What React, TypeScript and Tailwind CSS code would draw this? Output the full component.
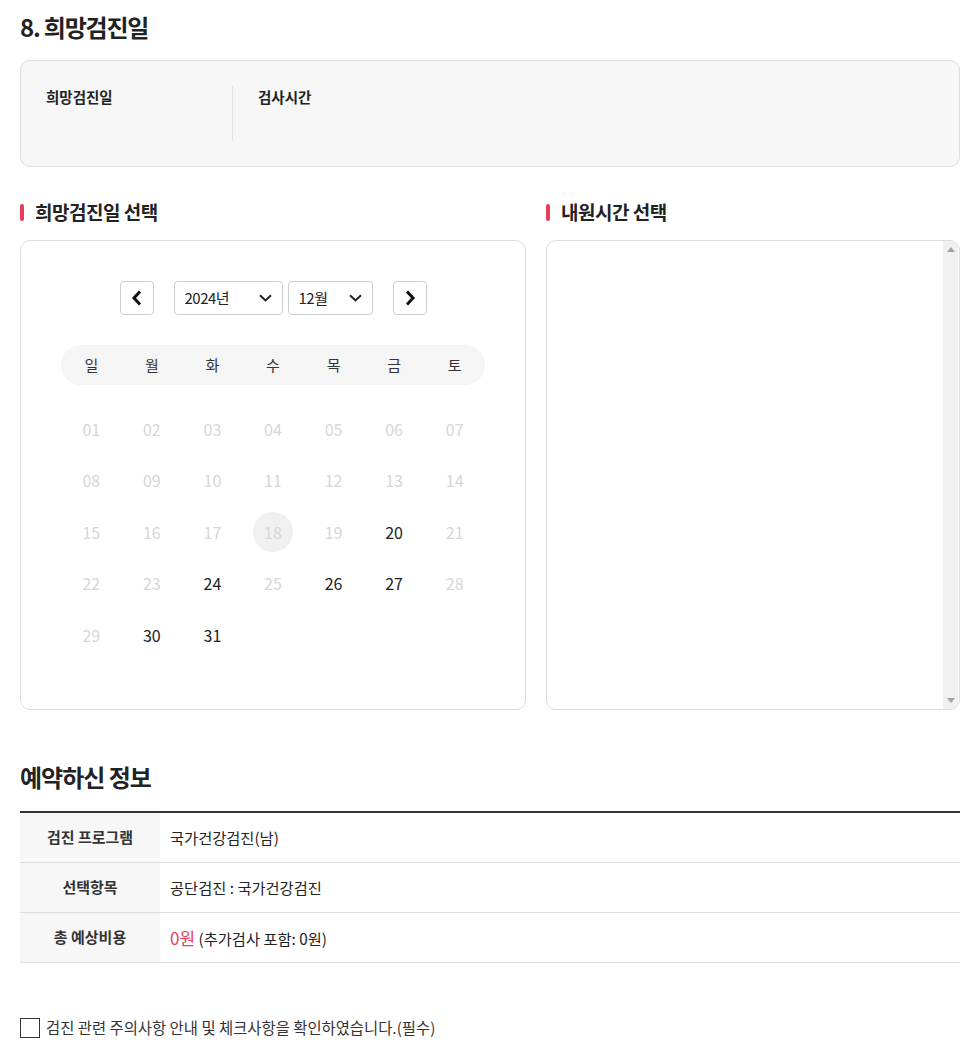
import React from "react";

const font = { fontFamily: '"Noto Sans CJK KR", "Noto Sans", sans-serif' };

const enabled = new Set([20, 24, 26, 27, 30, 31]);

function Chevron({ dir }: { dir: "left" | "right" }) {
  return (
    <svg width="16" height="18" viewBox="0 0 16 18">
      {dir === "left" ? (
        <path d="M11 2.5 L5 9 L11 15.5" fill="none" stroke="#111" strokeWidth="3" strokeLinejoin="miter" />
      ) : (
        <path d="M5 2.5 L11 9 L5 15.5" fill="none" stroke="#111" strokeWidth="3" strokeLinejoin="miter" />
      )}
    </svg>
  );
}

function Down() {
  return (
    <svg width="13" height="8" viewBox="0 0 13 8">
      <path d="M1 1.3 L6.5 6.4 L12 1.3" fill="none" stroke="#222" strokeWidth="2" />
    </svg>
  );
}

export default function App() {
  const days: (number | null)[] = [];
  for (let i = 1; i <= 31; i++) days.push(i);
  const rows: (number | null)[][] = [];
  for (let i = 0; i < 35; i += 7) {
    const r = days.slice(i, i + 7);
    while (r.length < 7) r.push(null);
    rows.push(r);
  }
  const weekdays = ["일", "월", "화", "수", "목", "금", "토"];

  return (
    <div className="w-[960px] bg-white pl-5 pt-[9px] text-[#222]" style={font}>
      <h2 className="text-[24px] font-bold leading-[36px] tracking-[-1.2px] text-[#222]">8. 희망검진일</h2>

      <div className="mt-[15px] flex h-[107px] rounded-[10px] border border-[#dddddd] bg-[#f7f7f7] px-[25px] pt-[25px]">
        <div className="w-[186px] text-[14.5px] font-bold leading-[22px] text-[#222]">희망검진일</div>
        <div className="h-[55px] w-px bg-[#e2e2e2]" />
        <div className="pl-[25px] text-[14.5px] font-bold leading-[22px] text-[#222]">검사시간</div>
      </div>

      <div className="mt-[32px] flex gap-5">
        <div className="w-[506px]">
          <div className="flex h-[26px] items-center gap-[11px]">
            <span className="h-[17px] w-[4px] rounded-full bg-[#e83e5c]" />
            <span className="text-[19px] font-bold leading-[26px] tracking-[-0.5px] text-[#222]">희망검진일 선택</span>
          </div>
          <div className="mt-[15px] h-[470px] rounded-[10px] border border-[#dddddd] pt-[40px]">
            <div className="flex items-center justify-center">
              <button className="flex h-[34px] w-[34px] items-center justify-center rounded-[4px] border border-[#cccccc] bg-white">
                <Chevron dir="left" />
              </button>
              <div className="ml-[20px] flex h-[34px] w-[109px] items-center justify-between rounded-[4px] border border-[#cccccc] bg-white pl-[10px] pr-[10px] text-[15px] text-[#222]">
                <span className="tracking-[-0.5px]">2024년</span>
                <Down />
              </div>
              <div className="ml-[5px] flex h-[34px] w-[85px] items-center justify-between rounded-[4px] border border-[#cccccc] bg-white pl-[10px] pr-[10px] text-[15px] text-[#222]">
                <span className="tracking-[-0.5px]">12월</span>
                <Down />
              </div>
              <button className="ml-[20px] flex h-[34px] w-[34px] items-center justify-center rounded-[4px] border border-[#cccccc] bg-white">
                <Chevron dir="right" />
              </button>
            </div>

            <div className="mx-[40px] mt-[30px]">
              <div className="grid h-[40px] grid-cols-7 items-center rounded-full bg-[#f5f5f5] text-[15px] text-[#333]">
                {weekdays.map((w) => (
                  <div key={w} className="text-center">{w}</div>
                ))}
              </div>
              <div className="mt-[18px]">
                {rows.map((r, ri) => (
                  <div key={ri} className="grid h-[51.5px] grid-cols-7 items-center">
                    {r.map((d, di) => (
                      <div key={di} className="flex justify-center">
                        {d !== null && (
                          <span
                            className={
                              "flex h-[40px] w-[40px] items-center justify-center rounded-full text-[16px] " +
                              (d === 18 ? "bg-[#f0f0f0] text-[#d6d6d6]" : enabled.has(d) ? "text-[#222]" : "text-[#d6d6d6]")
                            }
                          >
                            {String(d).padStart(2, "0")}
                          </span>
                        )}
                      </div>
                    ))}
                  </div>
                ))}
              </div>
            </div>
          </div>
        </div>

        <div className="w-[414px]">
          <div className="flex h-[26px] items-center gap-[11px]">
            <span className="h-[17px] w-[4px] rounded-full bg-[#e83e5c]" />
            <span className="text-[19px] font-bold leading-[26px] tracking-[-0.5px] text-[#222]">내원시간 선택</span>
          </div>
          <div className="mt-[15px] flex h-[470px] justify-end overflow-hidden rounded-[10px] border border-[#dddddd]">
            <div className="mr-[1px] flex w-[15px] flex-col items-center justify-between bg-[#f0f0f0] py-[6px]">
              <svg width="8" height="5" viewBox="0 0 8 5"><path d="M0 5 L4 0 L8 5 Z" fill="#a3a3a3" /></svg>
              <svg width="8" height="5" viewBox="0 0 8 5"><path d="M0 0 L4 5 L8 0 Z" fill="#a3a3a3" /></svg>
            </div>
          </div>
        </div>
      </div>

      <h2 className="mt-[49px] text-[24px] font-bold leading-[36px] tracking-[-1px] text-[#222]">예약하신 정보</h2>

      <div className="mt-[16px] w-[940px] border-t-2 border-[#333]">
        {[
          ["검진 프로그램", <span>국가건강검진(남)</span>],
          ["선택항목", <span>공단검진 : 국가건강검진</span>],
          [
            "총 예상비용",
            <span>
              <span className="text-[17px] text-[#e83e5c]">0원</span> (추가검사 포함: 0원)
            </span>,
          ],
        ].map(([k, v], i) => (
          <div key={i} className="flex h-[50px] border-b border-[#dddddd]">
            <div className="flex w-[140px] items-center justify-center bg-[#f7f7f7] text-[15px] font-bold text-[#333]">{k}</div>
            <div className="flex items-center pl-[10px] text-[15.3px] text-[#222]">{v}</div>
          </div>
        ))}
      </div>

      <label className="mt-[53px] flex items-center gap-[6px]">
        <span className="h-[20px] w-[20px] border border-[#333] bg-white" />
        <span className="text-[15.4px] text-[#333]">검진 관련 주의사항 안내 및 체크사항을 확인하였습니다.(필수)</span>
      </label>
      <div className="h-[12px]" />
    </div>
  );
}
